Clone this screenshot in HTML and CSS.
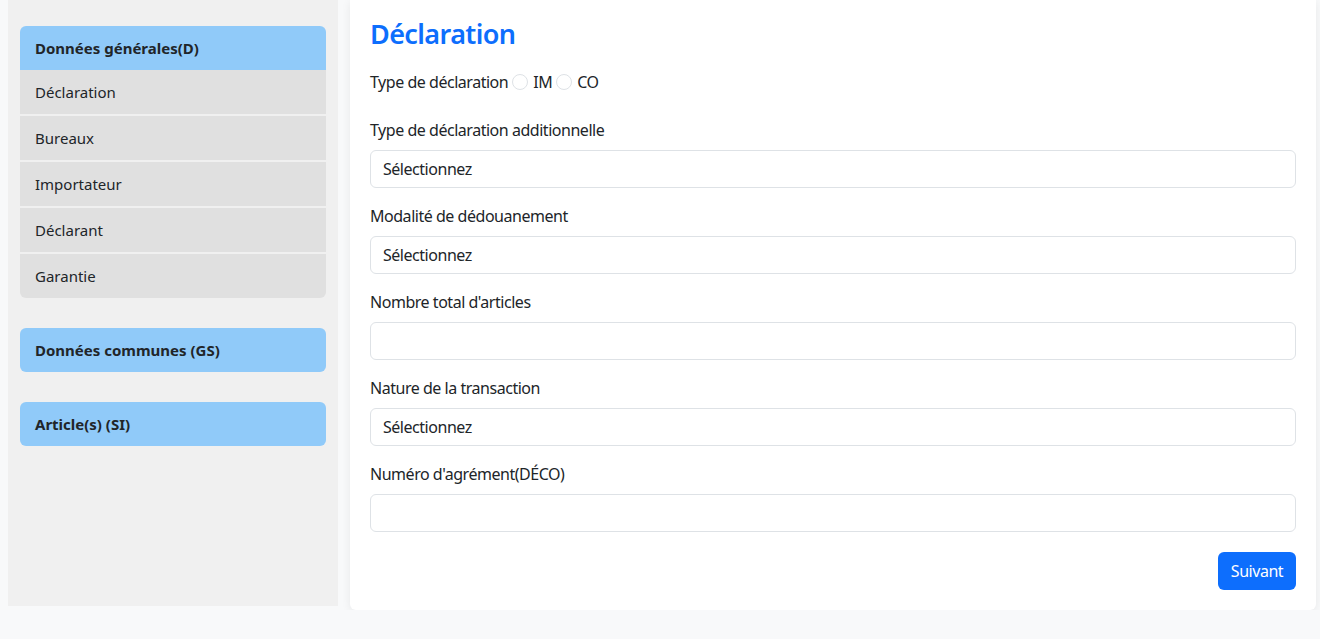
FILE: index.html
```html
<!DOCTYPE html>
<html lang="fr">
<head>
<meta charset="utf-8">
<title>Déclaration</title>
<link rel="stylesheet" href="styles.css">
</head>
<body>
<div class="layout">
  <aside class="sidebar">
    <div class="group">
      <div class="group-head">Données générales(D)</div>
      <ul class="group-items">
        <li>Déclaration</li>
        <li>Bureaux</li>
        <li>Importateur</li>
        <li>Déclarant</li>
        <li>Garantie</li>
      </ul>
    </div>
    <div class="group">
      <div class="group-head solo">Données communes (GS)</div>
    </div>
    <div class="group">
      <div class="group-head solo">Article(s) (SI)</div>
    </div>
  </aside>
  <main class="card">
    <h3 class="title">Déclaration</h3>
    <div class="radio-row">
      <span>Type de déclaration</span>
      <span class="radio"></span><span class="radio-label">IM</span>
      <span class="radio"></span><span class="radio-label">CO</span>
    </div>
    <div class="field">
      <label class="field-label">Type de déclaration additionnelle</label>
      <div class="control">Sélectionnez</div>
    </div>
    <div class="field">
      <label class="field-label">Modalité de dédouanement</label>
      <div class="control">Sélectionnez</div>
    </div>
    <div class="field">
      <label class="field-label">Nombre total d'articles</label>
      <div class="control"></div>
    </div>
    <div class="field">
      <label class="field-label">Nature de la transaction</label>
      <div class="control">Sélectionnez</div>
    </div>
    <div class="field">
      <label class="field-label">Numéro d'agrément(DÉCO)</label>
      <div class="control"></div>
    </div>
    <div class="actions">
      <button class="btn">Suivant</button>
    </div>
  </main>
</div>
</body>
</html>
```
FILE: styles.css
```css
* { box-sizing: border-box; }
html, body { margin: 0; padding: 0; }
body {
  background: #f8f9fa;
  font-family: "Noto Sans", "Open Sans", sans-serif;
  color: #212529;
  font-size: 16px;
  letter-spacing: -0.47px;
}
.layout {
  display: flex;
  align-items: flex-start;
  gap: 12px;
  padding-left: 8px;
}
.sidebar {
  width: 330px;
  height: 606px;
  background: #f0f0f0;
  padding: 26px 12px;
  display: flex;
  flex-direction: column;
  gap: 30px;
  letter-spacing: 0;
}
.group-head {
  background: #90caf9;
  height: 44px;
  display: flex;
  align-items: center;
  padding-left: 15px;
  font-weight: 700;
  font-size: 15px;
  border-radius: 6px 6px 0 0;
}
.group-head.solo { border-radius: 6px; }
.group-items {
  list-style: none;
  margin: 0;
  padding: 0;
  display: flex;
  flex-direction: column;
  gap: 2px;
}
.group-items li {
  background: #e0e0e0;
  height: 44px;
  display: flex;
  align-items: center;
  padding-left: 15px;
  font-size: 15px;
}
.group-items li:last-child { border-radius: 0 0 6px 6px; }
.card {
  width: 966px;
  height: 610px;
  background: #fff;
  border-radius: 0 0 6px 6px;
  box-shadow: 0 2px 10px rgba(0, 0, 0, 0.07);
  padding: 16px 20px 20px;
  display: flex;
  flex-direction: column;
}
.title {
  margin: 0 0 18px;
  color: #0d6efd;
  font-size: 27px;
  font-weight: 600;
  line-height: 36px;
  letter-spacing: -0.6px;
}
.radio-row {
  display: flex;
  align-items: center;
  height: 24px;
  margin-bottom: 24px;
}
.radio {
  width: 16px;
  height: 16px;
  border: 1px solid #dee2e6;
  border-radius: 50%;
  background: #fff;
  margin-left: 4px;
}
.radio-label { margin-left: 5px; }
.radio-label + .radio { margin-left: 4px; }
.field {
  display: flex;
  flex-direction: column;
  margin-bottom: 16px;
}
.field-label {
  line-height: 24px;
  margin-bottom: 8px;
}
.control {
  height: 38px;
  border: 1px solid #dee2e6;
  border-radius: 6px;
  padding: 0 12px;
  display: flex;
  align-items: center;
}
.actions {
  display: flex;
  justify-content: flex-end;
  margin-top: 4px;
}
.btn {
  font: inherit;
  letter-spacing: inherit;
  background: #0d6efd;
  color: #fff;
  border: none;
  border-radius: 6px;
  height: 38px;
  padding: 0 12px;
  width: 78px;
}
```
